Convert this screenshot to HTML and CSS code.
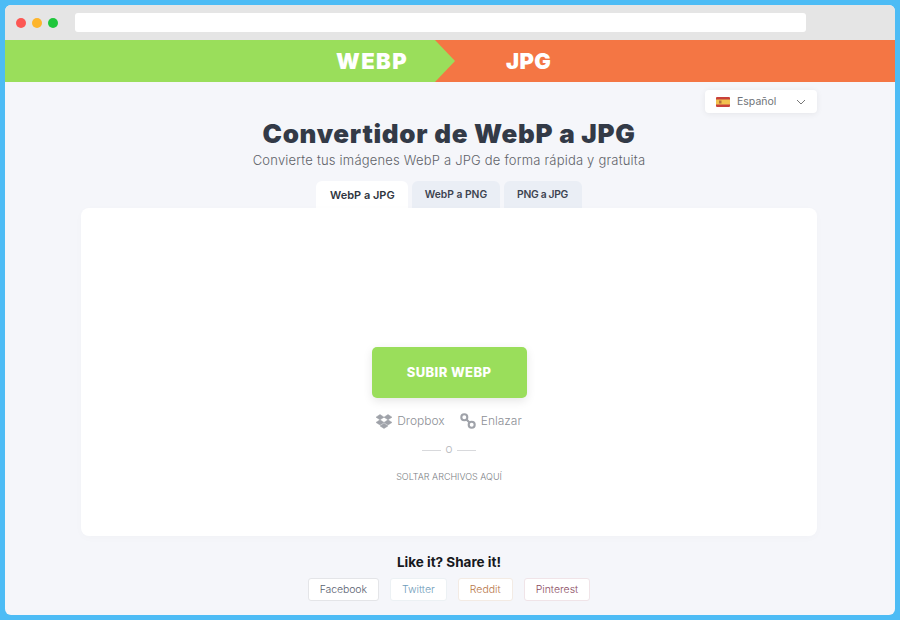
FILE: index.html
```html
<!DOCTYPE html>
<html lang="es">
<head>
    <meta charset="UTF-8">
    <title>Convertidor de WebP a JPG</title>
    <link rel="stylesheet" href="styles.css">
</head>
<body>
    <div class="window">
        <div class="toolbar">
            <div class="dots">
                <span class="dot dot-red"></span>
                <span class="dot dot-yellow"></span>
                <span class="dot dot-green"></span>
            </div>
            <div class="address"></div>
        </div>

        <div class="banner">
            <div class="banner-from">WEBP</div>
            <div class="banner-to">JPG</div>
        </div>

        <div class="content">
            <div class="lang-row">
                <div class="lang">
                    <svg class="flag" width="14" height="10" viewBox="0 0 14 10">
                        <rect width="14" height="10" rx="1" fill="#c8413a"/>
                        <rect y="2.5" width="14" height="5" fill="#f2c14e"/>
                        <rect x="3" y="3.5" width="2.5" height="3" fill="#b5713a"/>
                    </svg>
                    <span class="lang-name">Español</span>
                    <svg class="chevron" width="10" height="6" viewBox="0 0 10 6">
                        <path d="M1 1l4 4 4-4" fill="none" stroke="#777" stroke-width="1"/>
                    </svg>
                </div>
            </div>

            <h1>Convertidor de WebP a JPG</h1>
            <p class="subtitle">Convierte tus imágenes WebP a JPG de forma rápida y gratuita</p>

            <div class="tabs">
                <div class="tab tab-active">WebP a JPG</div>
                <div class="tab">WebP a PNG</div>
                <div class="tab tab-short">PNG a JPG</div>
            </div>

            <div class="card">
                <button class="upload">SUBIR WEBP</button>
                <div class="sources">
                    <span class="source">
                        <svg width="16" height="15" viewBox="0 0 16 15">
                            <path fill="#9fa2a9" stroke="#9fa2a9" stroke-width="0.5" d="M4 .5L0 3.2l4 2.6 4-2.6zM12 .5L8 3.2l4 2.6 4-2.6zM0 8.4l4 2.6 4-2.6-4-2.6zM12 5.8L8 8.4l4 2.6 4-2.6zM4 11.9l4 2.6 4-2.6-4-2.6z"/>
                        </svg>
                        Dropbox
                    </span>
                    <span class="source">
                        <svg width="16" height="16" viewBox="0 0 16 16">
                            <g fill="none" stroke="#9fa2a9" stroke-width="2.1">
                                <circle cx="4.3" cy="4.3" r="3"/>
                                <circle cx="11.7" cy="11.7" r="3"/>
                                <path d="M6.5 6.5l3 3"/>
                            </g>
                        </svg>
                        Enlazar
                    </span>
                </div>
                <div class="divider"><span>O</span></div>
                <div class="drop">SOLTAR ARCHIVOS AQUÍ</div>
            </div>

            <div class="share">
                <div class="share-title">Like it? Share it!</div>
                <div class="share-links">
                    <a class="share-btn share-facebook">Facebook</a>
                    <a class="share-btn share-twitter">Twitter</a>
                    <a class="share-btn share-reddit">Reddit</a>
                    <a class="share-btn share-pinterest">Pinterest</a>
                </div>
            </div>
        </div>
    </div>
</body>
</html>
```

FILE: styles.css
```css
html, body {
    height: 100%;
}
body {
    margin: 0;
    padding: 5px;
    box-sizing: border-box;
    background-color: #4dbcf5;
    font-family: 'Inter', 'Liberation Sans', sans-serif;
}
.window {
    height: 100%;
    display: flex;
    flex-direction: column;
    border-radius: 6px;
    overflow: hidden;
    background-color: #f5f6fa;
}
.toolbar {
    height: 35px;
    flex: none;
    display: flex;
    align-items: center;
    background-color: #e5e5e5;
    padding-left: 11px;
    box-sizing: border-box;
}
.dots {
    display: flex;
    gap: 6px;
    width: 59px;
}
.dot {
    width: 10px;
    height: 10px;
    border-radius: 50%;
}
.dot-red { background-color: #fc5753; }
.dot-yellow { background-color: #fdb52c; }
.dot-green { background-color: #1fc63c; }
.address {
    width: 731px;
    height: 19px;
    background-color: #fff;
    border-radius: 3px;
}
.banner {
    height: 42px;
    flex: none;
    display: flex;
    color: #fff;
    font-size: 22px;
    font-weight: 900;
    line-height: 42px;
}
.banner-from {
    width: 430px;
    flex: none;
    box-sizing: border-box;
    padding-right: 27px;
    text-align: right;
    letter-spacing: 1.4px;
    background-color: #9ade5b;
    position: relative;
}
.banner-from::after {
    content: "";
    position: absolute;
    top: 0;
    left: 100%;
    width: 20px;
    height: 42px;
    background-color: #9ade5b;
    clip-path: polygon(0 0, 100% 50%, 0 100%);
}
.banner-to {
    flex: 1;
    padding-left: 71px;
    letter-spacing: 0.3px;
    background-color: #f47644;
}
.content {
    flex: 1;
    display: flex;
    flex-direction: column;
    align-items: center;
    padding-right: 2px;
}
.lang-row {
    width: 736px;
    height: 23px;
    margin-top: 8px;
    display: flex;
    justify-content: flex-end;
}
.lang {
    width: 112px;
    height: 23px;
    box-sizing: border-box;
    padding: 0 11px;
    display: flex;
    align-items: center;
    background-color: #fff;
    border-radius: 4px;
    box-shadow: 0 1px 6px rgba(0, 0, 0, 0.07);
}
.lang-name {
    flex: 1;
    margin-left: 7px;
    font-size: 10.5px;
    color: #6f7378;
}
h1 {
    margin: 8px 0 0;
    font-size: 26px;
    line-height: 26px;
    font-weight: 900;
    letter-spacing: 0.7px;
    color: #333a47;
}
.subtitle {
    margin: 5px 0 0;
    font-size: 13px;
    line-height: 16px;
    font-weight: 300;
    letter-spacing: 0.2px;
    color: #5f6369;
}
.tabs {
    display: flex;
    gap: 4px;
    margin-top: 13px;
    height: 27px;
}
.tab {
    box-sizing: border-box;
    padding: 0 12.5px;
    font-size: 10.3px;
    font-weight: 600;
    line-height: 27px;
    color: #3d4350;
    background-color: #eaeef5;
    border-radius: 6px 6px 0 0;
}
.tab-active {
    padding: 0 13.5px;
    font-size: 11px;
    line-height: 29px;
    background-color: #fff;
    color: #2f3540;
}
.tab-short {
    padding: 0 13.5px;
    letter-spacing: -0.3px;
}
.card {
    width: 736px;
    height: 328px;
    box-sizing: border-box;
    padding-top: 139px;
    display: flex;
    flex-direction: column;
    align-items: center;
    background-color: #fff;
    border-radius: 8px;
    box-shadow: 0 2px 10px rgba(0, 0, 0, 0.02);
}
.upload {
    width: 155px;
    height: 51px;
    padding-bottom: 3px;
    border: none;
    border-radius: 5px;
    background-color: #9ade5b;
    color: #fff;
    font-family: inherit;
    font-size: 13px;
    font-weight: 800;
    letter-spacing: 0.4px;
    box-shadow: 0 3px 10px rgba(0, 0, 0, 0.1);
}
.sources {
    display: flex;
    gap: 15px;
    margin-top: 15px;
}
.source {
    display: flex;
    align-items: center;
    gap: 5px;
    font-size: 12px;
    line-height: 16px;
    font-weight: 300;
    color: #8d9096;
}
.divider {
    display: flex;
    align-items: center;
    gap: 5px;
    margin-top: 14px;
    font-size: 9px;
    line-height: 14px;
    color: #b5b7bb;
}
.divider::before, .divider::after {
    content: "";
    width: 19px;
    height: 1px;
    background-color: #d8d9dc;
}
.drop {
    margin-top: 14px;
    font-size: 9px;
    line-height: 12px;
    font-weight: 300;
    color: #7b7e84;
}
.share {
    display: flex;
    flex-direction: column;
    align-items: center;
}
.share-title {
    margin-top: 18px;
    font-size: 13.5px;
    line-height: 16px;
    font-weight: 700;
    color: #16181c;
}
.share-links {
    display: flex;
    gap: 11px;
    margin-top: 8px;
}
.share-btn {
    height: 23px;
    box-sizing: border-box;
    padding: 0 11px;
    font-size: 10.5px;
    line-height: 21px;
    font-weight: 300;
    background-color: #fff;
    border: 1px solid #e4e5e8;
    border-radius: 3px;
}
.share-facebook { color: #5a6170; letter-spacing: -0.1px; }
.share-twitter { color: #6f9cba; border-color: #ecf1f4; }
.share-reddit { color: #b87749; border-color: #f3ebe4; }
.share-pinterest { color: #8c4c63; border-color: #f0e4e8; }
```
